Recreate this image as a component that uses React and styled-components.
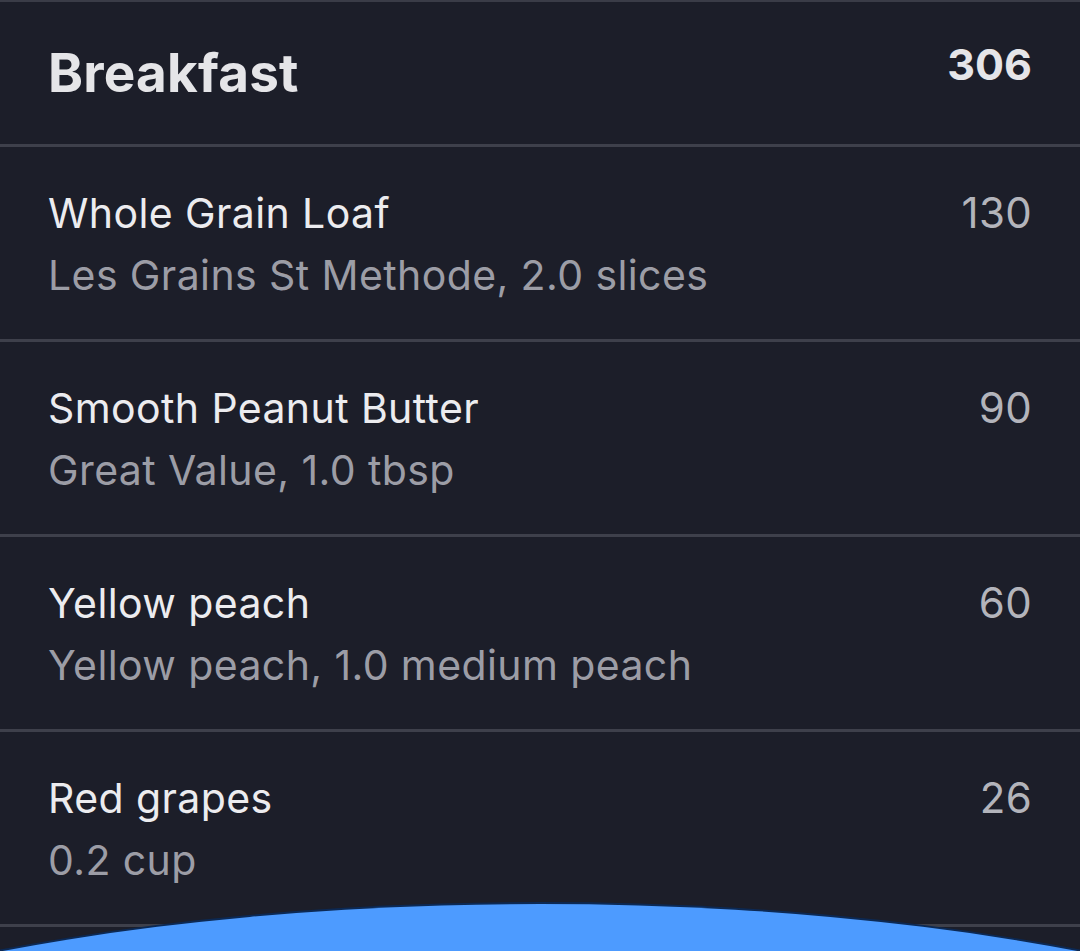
import React from "react";
import styled, { createGlobalStyle } from "styled-components";

const GlobalStyle = createGlobalStyle`
  html, body {
    margin: 0;
    padding: 0;
    background: #1c1e29;
  }
  body {
    font-family: Inter, "Noto Sans", sans-serif;
    -webkit-font-smoothing: antialiased;
  }
`;

const Screen = styled.div`
  position: relative;
  height: 951px;
  overflow: hidden;
  background: #1c1e29;
  border-top: 2px solid #3a3c47;
`;

const Header = styled.div`
  display: flex;
  justify-content: space-between;
  align-items: center;
  height: 142px;
  padding: 0 48px 0 48px;
  border-bottom: 3px solid #3e404b;
`;

const MealTitle = styled.h1`
  margin: 0;
  font-size: 53px;
  font-weight: 700;
  color: #e5e5e8;
  letter-spacing: 0.2px;
`;

const MealTotal = styled.span`
  margin-bottom: 18px;
  font-size: 43px;
  font-weight: 700;
  color: #e5e5e8;
`;

const Row = styled.div`
  display: flex;
  justify-content: space-between;
  align-items: flex-start;
  padding: 36px 48px 32px 48px;
  border-bottom: 3px solid #3e404b;
`;

const Info = styled.div`
  display: flex;
  flex-direction: column;
`;

const FoodName = styled.span`
  font-size: 41px;
  line-height: 60px;
  letter-spacing: 0.4px;
  color: #ececef;
`;

const FoodDetail = styled.span`
  font-size: 41px;
  line-height: 64px;
  letter-spacing: 0.4px;
  color: #9c9da6;
`;

const Calories = styled.span`
  font-size: 42px;
  line-height: 60px;
  letter-spacing: 0.3px;
  color: #b3b4bb;
`;

const Sheet = styled.div`
  position: absolute;
  left: -460px;
  top: 902px;
  width: 2000px;
  height: 600px;
  border-radius: 50%;
  background: #4d9bff;
  box-shadow: 0 0 0 2px #0c2954;
`;

const foods = [
  { name: "Whole Grain Loaf", detail: "Les Grains St Methode, 2.0 slices", kcal: 130 },
  { name: "Smooth Peanut Butter", detail: "Great Value, 1.0 tbsp", kcal: 90 },
  { name: "Yellow peach", detail: "Yellow peach, 1.0 medium peach", kcal: 60 },
  { name: "Red grapes", detail: "0.2 cup", kcal: 26 },
];

export default function App() {
  return (
    <>
      <GlobalStyle />
      <Screen>
        <Header>
          <MealTitle>Breakfast</MealTitle>
          <MealTotal>306</MealTotal>
        </Header>
        {foods.map((f) => (
          <Row key={f.name}>
            <Info>
              <FoodName>{f.name}</FoodName>
              <FoodDetail>{f.detail}</FoodDetail>
            </Info>
            <Calories>{f.kcal}</Calories>
          </Row>
        ))}
        <Sheet />
      </Screen>
    </>
  );
}
